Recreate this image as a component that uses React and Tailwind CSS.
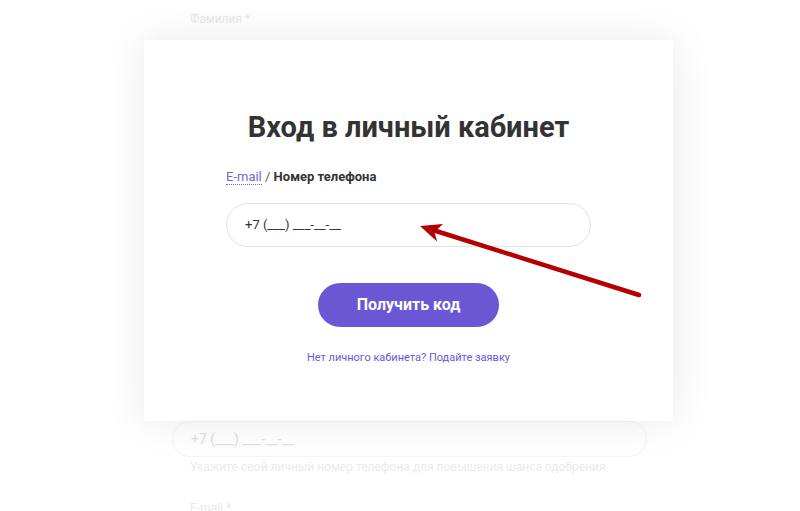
export default function App() {
  const font = { fontFamily: 'Roboto, "Noto Sans", sans-serif' };
  return (
    <div className="relative w-[800px] h-[511px] overflow-hidden bg-white" style={font}>
      {/* faint background form */}
      <div className="absolute left-[172px] top-0 w-[475px] flex flex-col">
        <div className="pl-[18px] pt-[12px] text-[12px] leading-[14px] text-[#e8e8e8]">
          Фамилия <span className="text-[#f8dede]">*</span>
        </div>
        <div className="mt-[8px] h-[36px] rounded-full" />
        <div className="mt-[351px] h-[36px] rounded-full border border-[#f5f5f5] flex items-center pl-[18px] text-[14px] text-[#e0e0e0]">
          +7 (___) ___-__-__
        </div>
        <div className="mt-[3px] pl-[18px] text-[12px] leading-[14px] text-[#ebebeb] whitespace-nowrap">
          Укажите свой личный номер телефона для повышения шанса одобрения
        </div>
        <div className="mt-[27px] pl-[18px] text-[12px] leading-[14px] text-[#e8e8e8]">
          E-mail <span className="text-[#f8dede]">*</span>
        </div>
      </div>

      {/* modal card */}
      <div className="absolute left-[144px] top-[40px] w-[529px] h-[381px] bg-white shadow-[0_0_40px_rgba(0,0,0,0.09)] px-[82px] pt-[70px] flex flex-col">
        <h1 className="text-center text-[29px] leading-[34px] font-bold text-[#333333]">
          Вход в личный кабинет
        </h1>
        <div className="mt-[25px] text-[13px] leading-[16px] text-[#555]">
          <span className="text-[#7a62d8] border-b border-dotted border-[#7a62d8]">E-mail</span>
          <span> / </span>
          <span className="font-bold text-[#333333]">Номер телефона</span>
        </div>
        <div className="mt-[18px] h-[44px] rounded-full border border-[#e3e3e3] flex items-center pl-[18px] text-[13px] text-[#333333]">
          +7 (___) ___-__-__
        </div>
        <div className="mt-[36px] flex justify-center">
          <button className="w-[181px] h-[44px] rounded-full bg-[#6b57d4] text-white text-[16px] font-bold">
            Получить код
          </button>
        </div>
        <div className="mt-[24px] text-center text-[11px] leading-[14px] text-[#6b57d4]">
          Нет личного кабинета? Подайте заявку
        </div>
      </div>

      {/* red arrow annotation */}
      <svg className="absolute left-0 top-0" width="800" height="511" viewBox="0 0 800 511">
        <line x1="639" y1="295" x2="436" y2="231" stroke="#b30000" strokeWidth="4.5" strokeLinecap="round" />
        <polygon points="420,226 437,241.5 434.5,232 443,224" fill="#b30000" />
      </svg>
    </div>
  );
}
